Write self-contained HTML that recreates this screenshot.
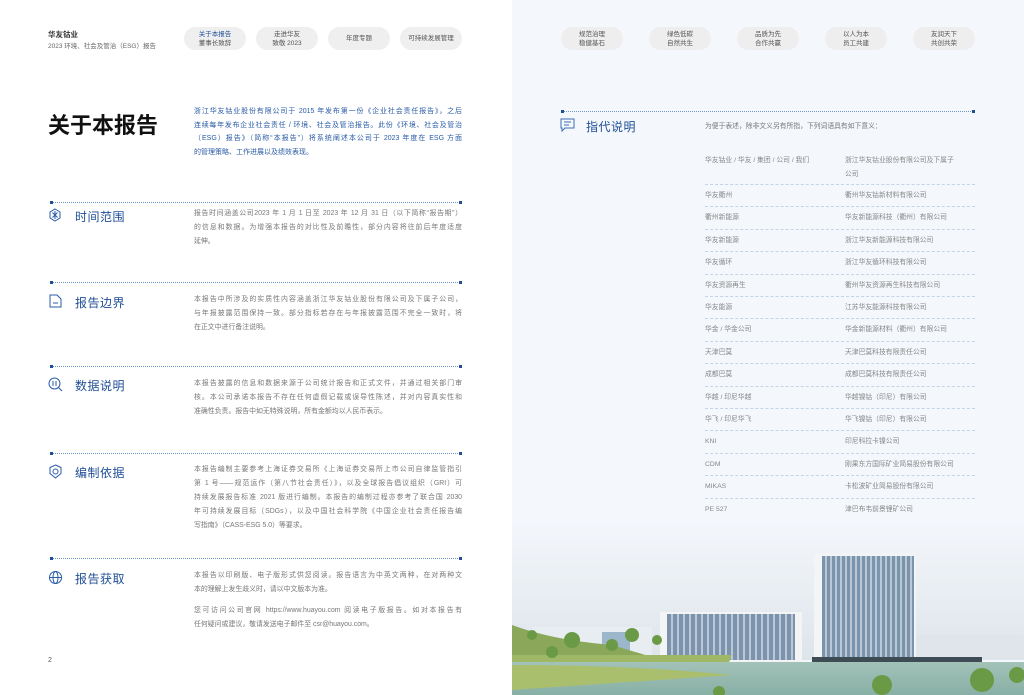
<!DOCTYPE html>
<html><head><meta charset="utf-8"><style>
*{margin:0;padding:0;box-sizing:border-box}
body{width:1024px;height:695px;position:relative;overflow:hidden;background:#fff;font-family:"Liberation Sans","Noto Sans CJK SC",sans-serif;color:#666}
.a{position:absolute}
.right{left:512px;top:0;width:512px;height:695px;background:#f4f7fc}
.pill{position:absolute;top:27px;width:62px;height:23px;border-radius:12px;background:#efefef;font-size:6.5px;line-height:9px;color:#555;text-align:center;display:flex;align-items:center;justify-content:center}
.rp{background:#eeeeee}
.dl{position:absolute;height:1px;border-top:1px dotted #6f94c8}
.dl:before,.dl:after{content:"";position:absolute;top:-2px;width:3px;height:3px;background:#1f4e96}
.dl:before{left:0}.dl:after{right:0}
.h{position:absolute;font-size:12px;color:#1f4e96;letter-spacing:.5px}
.b{position:absolute;left:194px;width:268px;font-size:6.9px;line-height:14px;color:#777}
.b div{text-align:justify;text-align-last:justify;white-space:nowrap}
.b div.l{text-align-last:left}
.row{position:absolute;left:705px;width:270px;font-size:6.8px;color:#888;border-bottom:1px dashed #c5d3e8}
.row span{position:absolute;left:140px;top:0;width:130px}
</style></head><body>
<div class="a" style="left:48px;top:29px;font-size:7.5px;font-weight:bold;color:#333">华友钴业</div>
<div class="a" style="left:48px;top:40px;font-size:6.5px;color:#666">2023 环境、社会及管治（ESG）报告</div>
<div class="pill" style="left:184px;color:#1f4e96"><div>关于本报告<br><span style="color:#555">董事长致辞</span></div></div>
<div class="pill" style="left:256px">走进华友<br>致敬 2023</div>
<div class="pill" style="left:328px">年度专题</div>
<div class="pill" style="left:400px">可持续发展管理</div>

<div class="a" style="left:48px;top:108px;font-size:22px;font-weight:bold;color:#111;letter-spacing:0">关于本报告</div>
<div class="b" style="top:105px;color:#2a5ba6;line-height:13.5px;font-size:7px">
<div>浙江华友钴业股份有限公司于 2015 年发布第一份《企业社会责任报告》，之后</div>
<div>连续每年发布企业社会责任 / 环境、社会及管治报告。此份《环境、社会及管治</div>
<div>（ESG）报告》（简称“本报告”）将系统阐述本公司于 2023 年度在 ESG 方面</div>
<div class="l">的管理策略、工作进展以及绩效表现。</div></div>

<div class="dl" style="left:50px;top:202px;width:412px"></div>
<svg class="a" style="left:48px;top:208px" width="14" height="14" viewBox="0 0 14 14" fill="none" stroke="#2a5ba6" stroke-width="1"><path d="M7 1L12 4V10L7 13L2 10V4Z"/><path d="M4.5 4.5L9.5 9.5M9.5 4.5L4.5 9.5M7 3V11"/></svg>
<div class="h" style="left:75px;top:208px">时间范围</div>
<div class="b" style="top:207px">
<div>报告时间涵盖公司2023 年 1 月 1 日至 2023 年 12 月 31 日（以下简称“报告期”）</div>
<div>的信息和数据。为增强本报告的对比性及前瞻性，部分内容将往前后年度适度</div>
<div class="l">延伸。</div></div>

<div class="dl" style="left:50px;top:282px;width:412px"></div>
<svg class="a" style="left:49px;top:294px" width="13" height="14" viewBox="0 0 13 14" fill="none" stroke="#2a5ba6" stroke-width="1"><path d="M1 1H8L12 5V13H1Z"/><path d="M4 9H9"/></svg>
<div class="h" style="left:75px;top:294px">报告边界</div>
<div class="b" style="top:293px">
<div>本报告中所涉及的实质性内容涵盖浙江华友钴业股份有限公司及下属子公司，</div>
<div>与年报披露范围保持一致。部分指标若存在与年报披露范围不完全一致时，将</div>
<div class="l">在正文中进行备注说明。</div></div>

<div class="dl" style="left:50px;top:366px;width:412px"></div>
<svg class="a" style="left:48px;top:377px" width="15" height="15" viewBox="0 0 15 15" fill="none" stroke="#2a5ba6" stroke-width="1"><circle cx="6.5" cy="6.5" r="5.5"/><path d="M10.5 10.5L14 14M5 4V9M8 4V9"/></svg>
<div class="h" style="left:75px;top:377px">数据说明</div>
<div class="b" style="top:377px">
<div>本报告披露的信息和数据来源于公司统计报告和正式文件，并通过相关部门审</div>
<div>核。本公司承诺本报告不存在任何虚假记载或误导性陈述，并对内容真实性和</div>
<div class="l">准确性负责。报告中如无特殊说明，所有金额均以人民币表示。</div></div>

<div class="dl" style="left:50px;top:453px;width:412px"></div>
<svg class="a" style="left:49px;top:464px" width="13" height="15" viewBox="0 0 13 15" fill="none" stroke="#2a5ba6" stroke-width="1"><path d="M6.5 1L12 3.5V9.5L6.5 14L1 9.5V3.5Z"/><circle cx="6.5" cy="7.5" r="2.5"/></svg>
<div class="h" style="left:75px;top:464px">编制依据</div>
<div class="b" style="top:463px">
<div>本报告编制主要参考上海证券交易所《上海证券交易所上市公司自律监管指引</div>
<div>第 1 号——规范运作（第八节社会责任）》，以及全球报告倡议组织（GRI）可</div>
<div>持续发展报告标准 2021 版进行编制。本报告的编制过程亦参考了联合国 2030</div>
<div>年可持续发展目标（SDGs），以及中国社会科学院《中国企业社会责任报告编</div>
<div class="l">写指南》（CASS-ESG 5.0）等要求。</div></div>

<div class="dl" style="left:50px;top:558px;width:412px"></div>
<svg class="a" style="left:48px;top:570px" width="15" height="15" viewBox="0 0 15 15" fill="none" stroke="#2a5ba6" stroke-width="1"><circle cx="7.5" cy="7.5" r="6"/><ellipse cx="7.5" cy="7.5" rx="2.5" ry="6"/><path d="M1.5 7.5H13.5"/></svg>
<div class="h" style="left:75px;top:570px">报告获取</div>
<div class="b" style="top:569px">
<div>本报告以印刷版、电子版形式供您阅读。报告语言为中英文两种，在对两种文</div>
<div class="l">本的理解上发生歧义时，请以中文版本为准。</div></div>
<div class="b" style="top:604px">
<div>您可访问公司官网 https://www.huayou.com 阅读电子版报告。如对本报告有</div>
<div class="l">任何疑问或建议，敬请发送电子邮件至 csr@huayou.com。</div></div>
<div class="a" style="left:48px;top:657px;font-size:7px;color:#555">2</div>

<div class="a right">
<svg width="512" height="695" style="position:absolute;left:0;top:0">
<defs><linearGradient id="sky" x1="0" y1="0" x2="0" y2="1"><stop offset="0" stop-color="#f4f7fc"/><stop offset="0.5" stop-color="#e9eef3"/><stop offset="1" stop-color="#dde4ea"/></linearGradient>
<linearGradient id="wat" x1="0" y1="0" x2="0" y2="1"><stop offset="0" stop-color="#a3c2b8"/><stop offset="1" stop-color="#88b0a6"/></linearGradient></defs>
<rect x="0" y="520" width="512" height="140" fill="url(#sky)"/>
<rect x="20" y="627" width="120" height="30" fill="#e8edf1"/>
<rect x="90" y="632" width="28" height="22" fill="#9cb6cc"/>
<rect x="148" y="612" width="142" height="50" fill="#f2f4f6"/>
<rect x="155" y="614" width="128" height="46" fill="#7b93ad"/>
<g stroke="#e6ecf2" stroke-width="1.2"><path d="M160 614V660M166 614V660M172 614V660M178 614V660M184 614V660M190 614V660M196 614V660M202 614V660M208 614V660M214 614V660M220 614V660M226 614V660M232 614V660M238 614V660M244 614V660M250 614V660M256 614V660M262 614V660M268 614V660M274 614V660M280 614V660"/></g>
<rect x="302" y="554" width="102" height="106" fill="#f2f4f6"/>
<rect x="310" y="556" width="92" height="104" fill="#7a94ad"/>
<g stroke="#e4ebf2" stroke-width="1.2"><path d="M314 556V660M319 556V660M324 556V660M329 556V660M334 556V660M339 556V660M344 556V660M349 556V660M354 556V660M359 556V660M364 556V660M369 556V660M374 556V660M379 556V660M384 556V660M389 556V660M394 556V660M399 556V660"/></g>
<rect x="405" y="635" width="107" height="25" fill="#dfe5ea"/>
<path d="M0 625Q40 640 100 645L150 660H0Z" fill="#8aa75a"/>
<path d="M0 655L220 655L210 680L0 690Z" fill="#9fb868"/>
<rect x="300" y="657" width="170" height="6" fill="#3d4c55"/>
<rect x="0" y="662" width="512" height="33" fill="url(#wat)"/>
<path d="M0 665Q120 665 220 675L0 690Z" fill="#a9bf6e"/>
<g fill="#6a9a45"><circle cx="60" cy="640" r="8"/><circle cx="40" cy="652" r="6"/><circle cx="120" cy="635" r="7"/><circle cx="100" cy="645" r="6"/><circle cx="145" cy="640" r="5"/><circle cx="20" cy="635" r="5"/><circle cx="470" cy="680" r="12"/><circle cx="505" cy="675" r="8"/><circle cx="370" cy="685" r="10"/><circle cx="207" cy="692" r="6"/></g>
</svg>
</div>

<div class="pill rp" style="left:561px">规范治理<br>稳健基石</div>
<div class="pill rp" style="left:649px">绿色低碳<br>自然共生</div>
<div class="pill rp" style="left:737px">品质为先<br>合作共赢</div>
<div class="pill rp" style="left:825px">以人为本<br>员工共建</div>
<div class="pill rp" style="left:913px">友润天下<br>共创共荣</div>

<div class="dl" style="left:561px;top:111px;width:414px"></div>
<svg class="a" style="left:560px;top:118px" width="15" height="14" viewBox="0 0 15 14" fill="none" stroke="#3b6cb3" stroke-width="1"><path d="M1 1H14V10H5L2 13V10H1Z"/><path d="M4 4H11M4 7H9"/></svg>
<div class="h" style="left:586px;top:118px">指代说明</div>
<div class="a" style="left:705px;top:120px;font-size:6.8px;color:#777">为便于表述，除非文义另有所指，下列词语具有如下意义：</div>

<div class="row" style="top:154px;height:31px;line-height:14px">华友钴业 / 华友 / 集团 / 公司 / 我们<span>浙江华友钴业股份有限公司及下属子<br>公司</span></div>
<div class="row" style="top:185px;height:22.4px;line-height:22px">华友衢州<span>衢州华友钴新材料有限公司</span></div>
<div class="row" style="top:207.4px;height:22.4px;line-height:22px">衢州新能源<span>华友新能源科技（衢州）有限公司</span></div>
<div class="row" style="top:229.8px;height:22.4px;line-height:22px">华友新能源<span>浙江华友新能源科技有限公司</span></div>
<div class="row" style="top:252.2px;height:22.4px;line-height:22px">华友循环<span>浙江华友循环科技有限公司</span></div>
<div class="row" style="top:274.6px;height:22.4px;line-height:22px">华友资源再生<span>衢州华友资源再生科技有限公司</span></div>
<div class="row" style="top:297px;height:22.4px;line-height:22px">华友能源<span>江苏华友能源科技有限公司</span></div>
<div class="row" style="top:319.4px;height:22.4px;line-height:22px">华金 / 华金公司<span>华金新能源材料（衢州）有限公司</span></div>
<div class="row" style="top:341.8px;height:22.4px;line-height:22px">天津巴莫<span>天津巴莫科技有限责任公司</span></div>
<div class="row" style="top:364.2px;height:22.4px;line-height:22px">成都巴莫<span>成都巴莫科技有限责任公司</span></div>
<div class="row" style="top:386.6px;height:22.4px;line-height:22px">华越 / 印尼华越<span>华越镍钴（印尼）有限公司</span></div>
<div class="row" style="top:409px;height:22.4px;line-height:22px">华飞 / 印尼华飞<span>华飞镍钴（印尼）有限公司</span></div>
<div class="row" style="top:431.4px;height:22.4px;line-height:22px">KNI<span>印尼科拉卡镍公司</span></div>
<div class="row" style="top:453.8px;height:22.4px;line-height:22px">CDM<span>刚果东方国际矿业简易股份有限公司</span></div>
<div class="row" style="top:476.2px;height:22.4px;line-height:22px">MIKAS<span>卡松波矿业简易股份有限公司</span></div>
<div class="row" style="top:498.6px;height:22.4px;line-height:22px;border:none">PE 527<span>津巴布韦前景锂矿公司</span></div>
</body></html>
